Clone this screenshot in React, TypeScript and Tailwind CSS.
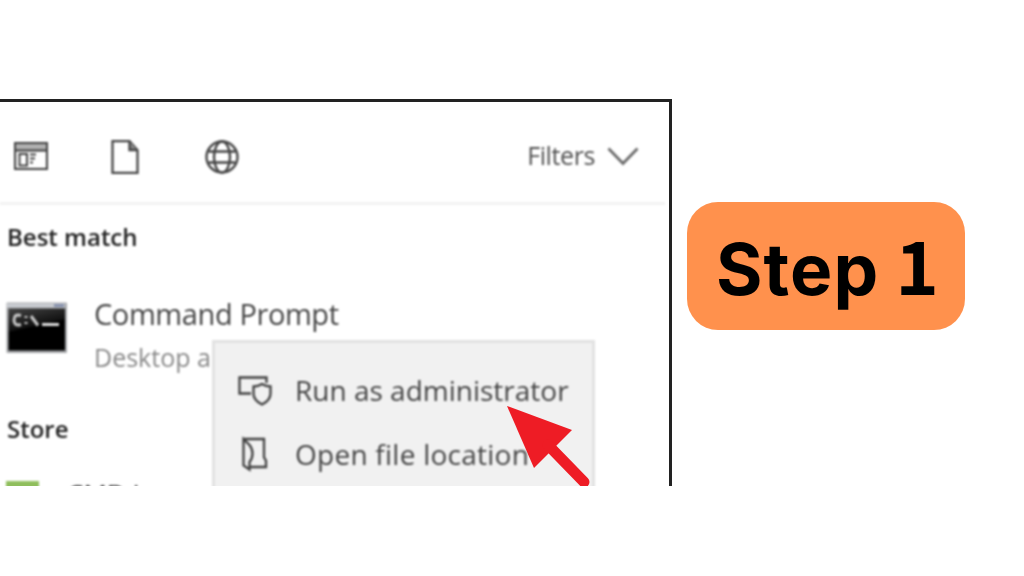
const textFont = "font-['Open_Sans','Noto_Sans',sans-serif]";

function WindowIcon() {
  return (
    <svg width="34" height="28" viewBox="0 0 34 28" fill="none" stroke="#444" className="-mt-0.5">
      <rect x="1" y="1" width="32" height="26" strokeWidth="2.2" />
      <rect x="2" y="2" width="30" height="6" fill="#b0b0b0" stroke="none" />
      <path d="M1 8.500h32" strokeWidth="2.2" />
      <rect x="5.500" y="12" width="7.500" height="11.500" strokeWidth="2" />
      <path d="M16 12.500h6M16 16.500h5M16 20.500h3" strokeWidth="2.2" />
    </svg>
  );
}

function DocumentIcon() {
  return (
    <svg width="28" height="34" viewBox="0 0 28 34" fill="none" stroke="#444" strokeWidth="2.3">
      <path d="M1.500 1.200h17l8 9v22.600h-25z" />
      <path d="M18.500 1v9h8" fill="#888" />
    </svg>
  );
}

function GlobeIcon() {
  return (
    <svg width="34" height="34" viewBox="0 0 34 34" fill="none" stroke="#444" strokeWidth="2.4">
      <circle cx="17" cy="17" r="15.5" />
      <ellipse cx="17" cy="17" rx="8" ry="15.5" />
      <path d="M3.500 11.500h27M3.500 22.500h27" />
    </svg>
  );
}

function PromptIcon() {
  return (
    <svg width="62" height="52" viewBox="0 0 62 52">
      <defs>
        <linearGradient id="screen" x1="0" y1="0" x2="0.3" y2="1">
          <stop offset="0" stopColor="#444" />
          <stop offset="0.5" stopColor="#111" />
          <stop offset="0.52" stopColor="#000" />
        </linearGradient>
      </defs>
      <rect x="0.5" y="0.5" width="60.500" height="50.500" rx="1" fill="#a5a7aa" />
      <rect x="1" y="1.500" width="58" height="4" fill="#c9ccd1" />
      <rect x="48" y="2" width="10" height="3" fill="#8792ae" />
      <rect x="2.500" y="6.500" width="56.500" height="42" fill="url(#screen)" />
      <path d="M15 13.500q-7-2-7 4.500t7 4.500M20 14v2M20 20v2M25 14l7 9.500" fill="none" stroke="#c8c8c8" strokeWidth="3" />
      <path d="M36 22.500h17" stroke="#eee" strokeWidth="2.800" />
    </svg>
  );
}

function AdminIcon() {
  return (
    <svg width="36" height="32" viewBox="0 0 36 32" fill="none" stroke="#404040" strokeWidth="2.3">
      <path d="M14 19.500H2.500V3.500h27V9" />
      <path d="M25 10q-4 2.500-8.500 2.500v7q0 7 8.500 11 8.500-4 8.500-11v-7q-4.500 0-8.500-2.500z" />
    </svg>
  );
}

function FileLocationIcon() {
  return (
    <svg width="28" height="36" viewBox="0 0 28 36" fill="none" stroke="#404040" strokeWidth="2.3">
      <path d="M2.500 3h20.500V21.500l2 3v6.500H9" />
      <path d="M2.500 3v26.500l6 4V26q3-3.500 3-8.500t-3-8.500z" />
    </svg>
  );
}

function SearchHeader() {
  return (
    <header className="flex h-[103px] w-[665px] items-start justify-between border-b-[3px] border-[#f2f2f2] pr-[25px] pl-3.5">
      <div className="flex items-center gap-[63px] pt-[38px]">
        <WindowIcon />
        <DocumentIcon />
        <span className="pl-[3px]">
          <GlobeIcon />
        </span>
      </div>
      <div className="flex items-center gap-3 pt-9">
        <span className="text-[25px] leading-[34px] font-medium tracking-[-0.4px] text-[#505050]">Filters</span>
        <svg className="mt-1" width="33" height="20" viewBox="0 0 33 20" fill="none" stroke="#6a6a6a" strokeWidth="2.800">
          <path d="M1.500 1.500l14.500 15 14.500-15" />
        </svg>
      </div>
    </header>
  );
}

function ContextMenu() {
  return (
    <div className="absolute top-[238px] left-[212px] h-[160px] w-[383px] border-[3px] border-[#e2e2e2] bg-[#f1f1f1]">
      <div className="flex h-16 items-center pt-[30px] pl-[22px]">
        <AdminIcon />
        <span className="pl-[22px] text-[28px] leading-9 font-medium whitespace-nowrap text-[#444]">Run as administrator</span>
      </div>
      <div className="flex h-16 items-center pt-[30px] pl-[26px]">
        <FileLocationIcon />
        <span className="pl-[26px] text-[28px] leading-9 font-medium tracking-[0.25px] whitespace-nowrap text-[#444]">Open file location</span>
      </div>
    </div>
  );
}

function SearchPanel() {
  return (
    <section className="relative h-[387px] w-[672px] overflow-hidden border-t-[3px] border-r-[3px] border-[#222] bg-white">
      <div className={`${textFont} blur-[0.9px]`}>
        <SearchHeader />
        <h2 className="pt-[15px] pl-[7px] text-[24px] leading-[34px] font-semibold text-[#222]">Best match</h2>
        <div className="flex pt-[41px] pl-1.5">
          <div className="pt-[7px]">
            <PromptIcon />
          </div>
          <div className="pl-[26px]">
            <p className="text-[29px] leading-[38px] font-medium tracking-[-0.4px] text-[#444]">Command Prompt</p>
            <p className="pt-[5px] text-[25px] leading-[38px] font-medium text-[#888]">Desktop app</p>
          </div>
        </div>
        <h2 className="pt-9 pl-[7px] text-[24px] leading-[34px] font-semibold text-[#222]">Store</h2>
        <div className="flex pt-[30px] pl-1.5">
          <div className="mt-[5px] h-8 w-[33px] bg-[#8fbe5c]" />
          <p className="pl-[28px] text-[26px] leading-[34px] font-medium text-[#444]">CMD L</p>
        </div>
        <ContextMenu />
      </div>
      <svg className="absolute top-[303px] left-[506px]" width="86" height="84" viewBox="0 0 86 84">
        <path d="M1 1l65 24-15 15-6 6-17 17z" fill="#ee1c25" />
        <path d="M42 40l36 37" stroke="#ee1c25" strokeWidth="11" strokeLinecap="round" />
      </svg>
    </section>
  );
}

export default function App() {
  return (
    <main className="flex h-screen w-screen items-start overflow-hidden bg-white pt-[99px]">
      <SearchPanel />
      <div className="mt-[103px] ml-[15px] flex h-32 w-[278px] items-center justify-center rounded-[31px] bg-[#ff914d]">
        <p className="pb-0.5 pl-1 font-['Inter',sans-serif] text-[71px] leading-none font-[650] tracking-[1.1px] text-black">
          Step <span className="-ml-0.5 font-['Noto_Sans_CJK_JP',sans-serif] text-[74px] font-bold">1</span>
        </p>
      </div>
    </main>
  );
}
